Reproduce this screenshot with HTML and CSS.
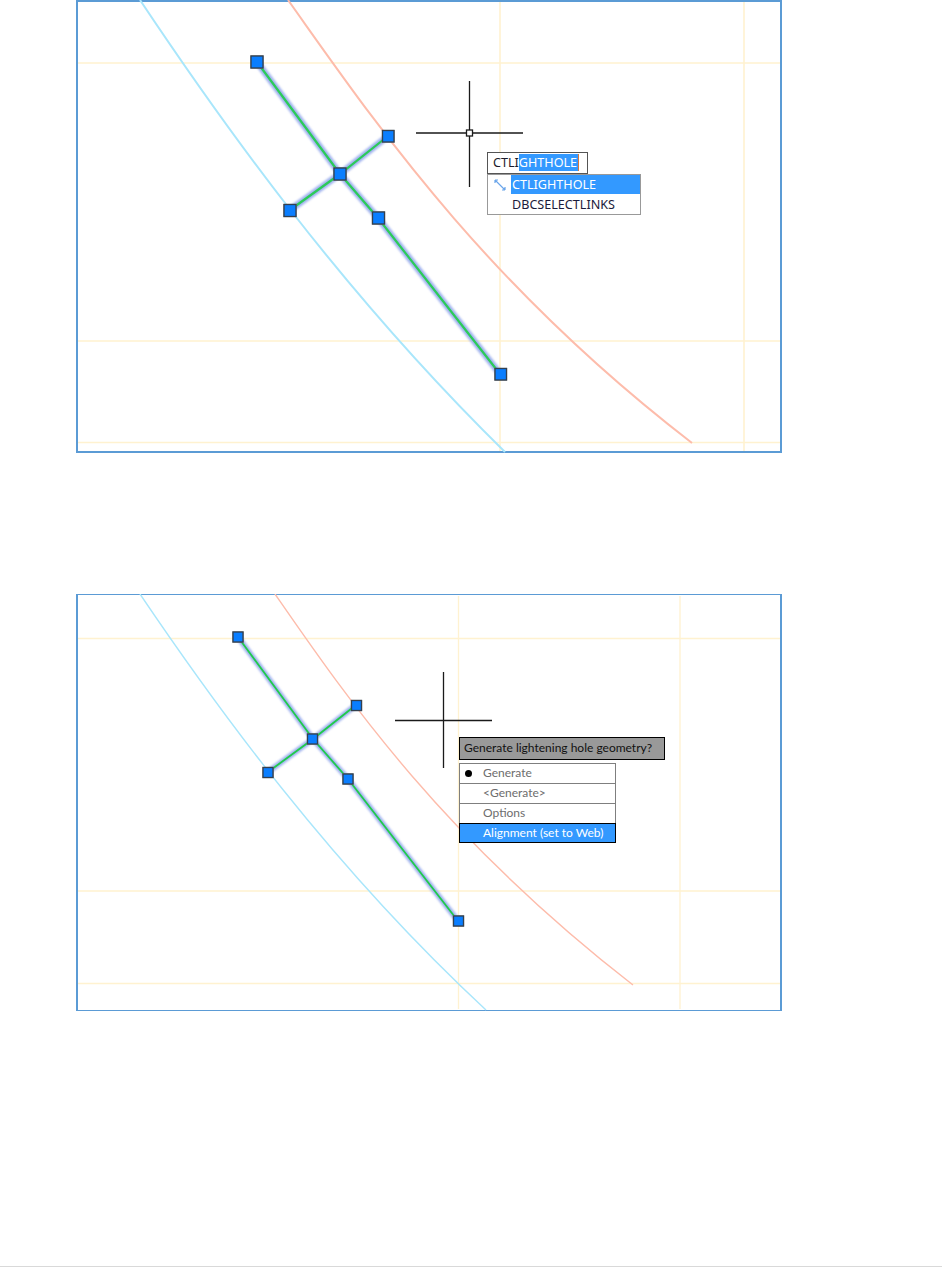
FILE: index.html
```html
<!DOCTYPE html>
<html lang="en">
<head>
  <meta charset="UTF-8">
  <title>Lightening hole command</title>
  <link rel="stylesheet" href="styles.css">
</head>
<body>
  <div class="figure figure-top">
    <svg class="drawing" viewBox="76 0 706 453">
      <path class="guide" d="M78 63H780M78 341H780M78 442.5H780M500 2V451M744 2V451"/>
      <path class="curve cyan" d="M140 0C220 120 340 290 505 452"/>
      <path class="curve salmon" d="M288 0C370 115 480 280 692 443"/>
      <path class="halo" d="M257 62L340 174L378 218L500 374M290 210L340 174L388 136"/>
      <path class="web" d="M257 62L340 174L378 218L500 374M290 210L340 174L388 136"/>
      <rect class="grip" x="251" y="56" width="12" height="12"/>
      <rect class="grip" x="382.5" y="130.5" width="11.5" height="11.5"/>
      <rect class="grip" x="334" y="168" width="12" height="12"/>
      <rect class="grip" x="284" y="204.5" width="12" height="12"/>
      <rect class="grip" x="372.5" y="212" width="12" height="12"/>
      <rect class="grip" x="495" y="368.5" width="11.5" height="11.5"/>
      <path class="cross" d="M416 133H523M469.5 81V187"/>
      <rect class="pickbox" x="466.5" y="130" width="6" height="6"/>
    </svg>
    <div class="cmd-input"><span>CTLI</span><span class="selected">GHTHOLE</span></div>
    <div class="cmd-list">
      <div class="cmd-row active">
        <svg class="cmd-icon" viewBox="0 0 12 12">
          <path d="M1 1L11 11M1 1H4M1 1V4M11 11H8M11 11V8"/>
        </svg>
        <span class="cmd-name">CTLIGHTHOLE</span>
      </div>
      <div class="cmd-row">
        <span class="cmd-name">DBCSELECTLINKS</span>
      </div>
    </div>
  </div>

  <div class="figure figure-bottom">
    <svg class="drawing" viewBox="76 594 706 417">
      <path class="guide thin" d="M78 638.5H780M78 891H780M78 983.5H780M458.5 596V1009M680 596V1009"/>
      <path class="curve cyan thin" d="M140 594C215 705 330 865 486 1010"/>
      <path class="curve salmon thin" d="M275 594C345 695 440 835 633 985"/>
      <path class="halo thin" d="M238 637L313 739L348 779L458 921M268 772L313 739L356 705"/>
      <path class="web thin" d="M238 637L313 739L348 779L458 921M268 772L313 739L356 705"/>
      <rect class="grip" x="233" y="632" width="10" height="10"/>
      <rect class="grip" x="351.5" y="700.5" width="10" height="10"/>
      <rect class="grip" x="307.5" y="734" width="10" height="10"/>
      <rect class="grip" x="263" y="767.5" width="10" height="10"/>
      <rect class="grip" x="343" y="774" width="10" height="10"/>
      <rect class="grip" x="453.5" y="916" width="10" height="10"/>
      <path class="cross" d="M395 720.5H492M443.5 672V768"/>
    </svg>
    <div class="prompt">Generate lightening hole geometry?</div>
    <div class="option-list">
      <div class="option"><span class="bullet"></span>Generate</div>
      <div class="option">&lt;Generate&gt;</div>
      <div class="option">Options</div>
      <div class="option current">Alignment (set to Web)</div>
    </div>
  </div>

  <div class="page-end"></div>
</body>
</html>
```

FILE: styles.css
```css
html, body {
  height: 100%;
}
body {
  margin: 0;
  background: #fff;
  display: flex;
  flex-direction: column;
  font-family: "Noto Sans", "Open Sans", sans-serif;
  font-size: 12.6px;
  overflow: hidden;
}

/* figures */
.figure {
  position: relative;
  box-sizing: border-box;
  width: 706px;
  margin-left: 76px;
  border: 2px solid #5b9bd5;
  flex: none;
}
.figure-top {
  height: 453px;
}
.figure-bottom {
  height: 417px;
  margin-top: 141px;
  border-width: 1px 2px;
  font-family: Lato, "Noto Sans", sans-serif;
  font-size: 12px;
}
.drawing {
  position: absolute;
  left: -2px;
  top: -2px;
  width: 706px;
  height: 453px;
  display: block;
}
.figure-bottom .drawing {
  top: -1px;
  height: 417px;
}

/* drawing strokes */
.drawing path {
  fill: none;
}
.guide {
  stroke: #fff2d0;
  stroke-width: 1.6;
}
.guide.thin {
  stroke-width: 1.3;
}
.curve {
  stroke-width: 2;
}
.curve.thin {
  stroke-width: 1.4;
}
.cyan {
  stroke: #a9e6fb;
}
.salmon {
  stroke: #fdbcab;
}
.halo {
  stroke: #9fb2ee;
  stroke-width: 6.5;
  filter: blur(0.8px);
}
.halo.thin {
  stroke-width: 5.5;
}
.web {
  stroke: #2bcb58;
  stroke-width: 2.2;
}
.web.thin {
  stroke: #1fcb4a;
  stroke-width: 1.8;
}
.grip {
  fill: #0a7eff;
  stroke: #33404f;
  stroke-width: 1.3;
  filter: drop-shadow(0 0 0.6px #8a8a8a);
}
.cross {
  stroke: #1a1a1a;
  stroke-width: 1.3;
}
.pickbox {
  fill: #fff;
  stroke: #1a1a1a;
  stroke-width: 1.3;
}

/* dynamic input, top figure */
.cmd-input {
  position: absolute;
  left: 409px;
  top: 150px;
  box-sizing: border-box;
  width: 101px;
  height: 22px;
  padding-left: 5px;
  background: #fff;
  border: 1px solid #555;
  line-height: 19px;
  color: #1b1b2b;
  white-space: nowrap;
}
.cmd-input .selected {
  background: #3399ff;
  color: #fff;
  padding-right: 1px;
  border-right: 1px solid #d9773a;
}
.cmd-list {
  position: absolute;
  left: 409px;
  top: 172px;
  box-sizing: border-box;
  width: 154px;
  height: 41px;
  background: #fff;
  border: 1px solid #999;
}
.cmd-row {
  position: relative;
  height: 19.5px;
  padding-left: 23px;
  line-height: 19px;
  color: #1b1b3b;
}
.cmd-name {
  display: block;
  padding-left: 1px;
}
.cmd-row.active .cmd-name {
  background: #3399ff;
  color: #fff;
}
.cmd-icon {
  position: absolute;
  left: 6px;
  top: 4px;
  width: 12px;
  height: 12px;
}
.cmd-icon path {
  fill: none;
  stroke: #6aa5ea;
  stroke-width: 1.2;
}

/* prompt, bottom figure */
.prompt {
  position: absolute;
  left: 381px;
  top: 142px;
  box-sizing: border-box;
  width: 206px;
  height: 23px;
  padding-left: 4px;
  background: #999;
  border: 1px solid #000;
  line-height: 20px;
  color: #111;
  white-space: nowrap;
}
.option-list {
  position: absolute;
  left: 381px;
  top: 168px;
  box-sizing: border-box;
  width: 157px;
  background: #fff;
  border: 1px solid #7f7f7f;
  border-bottom: none;
}
.option {
  position: relative;
  box-sizing: border-box;
  height: 20px;
  padding-left: 23px;
  line-height: 17px;
  color: #6d6d6d;
  border-bottom: 1px solid #7f7f7f;
}
.option.current {
  margin: -1px -1px 0;
  height: 20px;
  padding-left: 23px;
  line-height: 17px;
  background: #3399ff;
  color: #fff;
  border: 1px solid #000;
}
.bullet {
  position: absolute;
  left: 5px;
  top: 6px;
  width: 7px;
  height: 7px;
  border-radius: 50%;
  background: #000;
}

/* thin rule at the foot of the page */
.page-end {
  margin-top: auto;
  height: 1px;
  background: #d9d9d9;
  flex: none;
}
```
